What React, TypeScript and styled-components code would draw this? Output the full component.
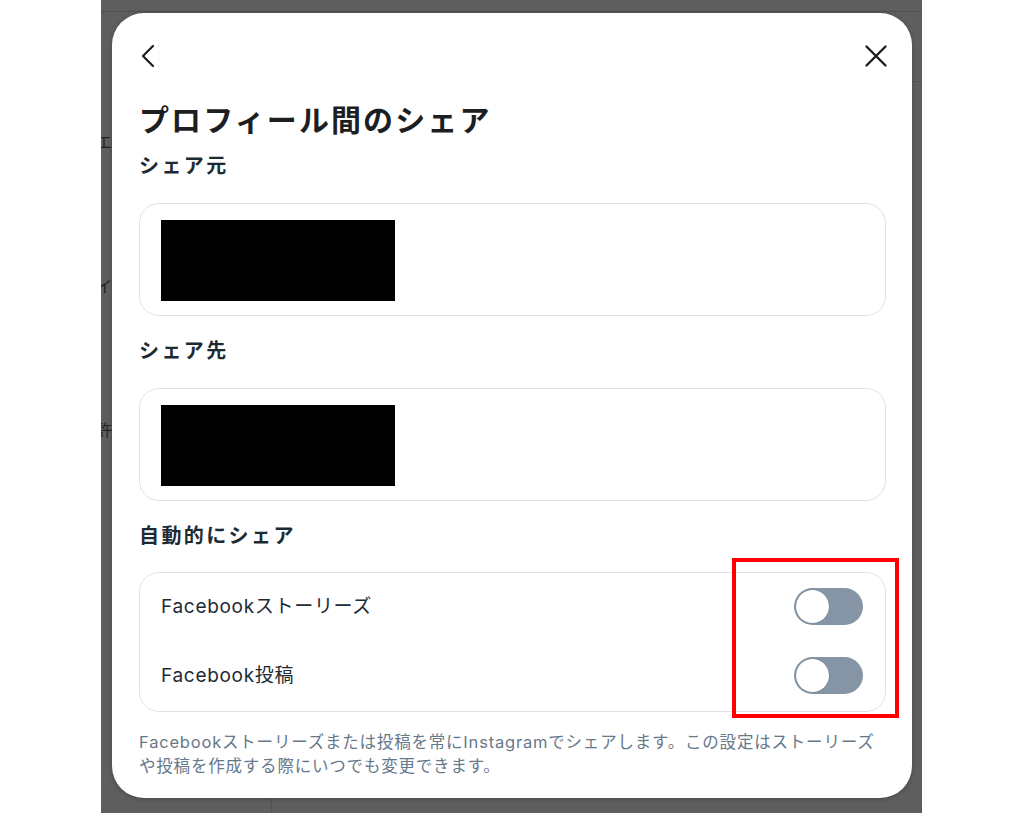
import React from 'react';
import styled, {createGlobalStyle} from 'styled-components';

const GlobalStyle = createGlobalStyle`
  html, body {
    margin: 0;
    padding: 0;
    background: #ffffff;
  }
  body {
    font-family: Inter, "Noto Sans CJK JP", "Noto Sans", sans-serif;
    -webkit-font-smoothing: antialiased;
  }
`;

const Page = styled.div`
  width: 1024px;
  height: 813px;
  display: flex;
  background: #ffffff;
`;

const Backdrop = styled.div`
  position: relative;
  margin-left: 101px;
  width: 821px;
  height: 813px;
  box-sizing: border-box;
  padding: 13px 10px 0 11px;
  background: #5e5e5e;
  overflow: hidden;
`;

// dimmed page behind the dialog
const BehindPage = styled.div`
  position: absolute;
  inset: 0;
  display: grid;
  grid-template-columns: 171px 1fr;
  grid-template-rows: 12px 70px 1fr;
`;

const BehindTop = styled.div`
  grid-column: 1 / 3;
  border-bottom: 1px solid #505050;
`;

const BehindSide = styled.div`
  grid-row: 2 / 4;
  border-right: 1px solid #535353;
  display: flex;
  flex-direction: column;
  gap: 122px;
  padding-top: 118px;
  margin-left: -5px;
  font-family: "Noto Sans CJK JP", sans-serif;
  font-size: 16px;
  line-height: 22px;
  color: #222222;
`;

const BehindHeader = styled.div`
  border-bottom: 1px solid #555555;
`;

const Modal = styled.div`
  position: relative;
  z-index: 1;
  width: 800px;
  height: 785px;
  box-sizing: border-box;
  padding: 21px 26px 0 27px;
  background: #ffffff;
  border-radius: 32px;
  box-shadow: 0 1px 4px rgba(0, 0, 0, 0.25);
  display: flex;
  flex-direction: column;
`;

const Header = styled.div`
  height: 44px;
  margin-right: -2px;
  display: flex;
  align-items: center;
  justify-content: space-between;
`;

const IconButton = styled.button`
  border: 0;
  padding: 0;
  background: none;
  width: 24px;
  height: 24px;
  display: flex;
  cursor: pointer;
  color: #1c1e21;
`;

const Title = styled.h1`
  margin: 22px 0 0;
  font-size: 30px;
  line-height: 40px;
  font-weight: 700;
  letter-spacing: 2.1px;
  color: #1c1e21;
`;

const SectionLabel = styled.h2<{$gap: number}>`
  margin: ${p => p.$gap}px 0 0;
  font-size: 20px;
  line-height: 28px;
  font-weight: 700;
  letter-spacing: 2.4px;
  color: #1c2b33;
`;

const Card = styled.div`
  margin-top: 23px;
  border: 1px solid #dde3ea;
  border-radius: 20px;
  box-sizing: border-box;
`;

const ProfileCard = styled(Card)`
  height: 113px;
  padding: 0 21px;
  display: flex;
  align-items: center;
`;

const Profile = styled.div`
  position: relative;
  display: flex;
  align-items: center;
  gap: 12px;
  height: 81px;
  width: 234px;
  margin-top: 2px;
`;

const Avatar = styled.div<{$ring: string}>`
  width: 44px;
  height: 44px;
  margin-left: 18px;
  border-radius: 50%;
  border: 2px solid ${p => p.$ring};
  background: #f0f2f5;
`;

const ProfileName = styled.span`
  font-size: 16px;
  color: #1c2b33;
`;

const Redaction = styled.div`
  position: absolute;
  inset: 0;
  background: #000000;
`;

const ToggleCard = styled(Card)`
  margin-top: 22px;
  padding: 0 22px 0 21px;
  display: flex;
  flex-direction: column;
`;

const ToggleRow = styled.div`
  height: 69px;
  display: flex;
  align-items: center;
  justify-content: space-between;
`;

const RowLabel = styled.span`
  font-size: 19px;
  line-height: 24px;
  margin-top: -2px;
  color: #1c2b33;
  letter-spacing: 0.7px;
`;

const Switch = styled.div<{$on: boolean}>`
  width: 69px;
  height: 37px;
  margin-top: -2px;
  box-sizing: border-box;
  border-radius: 19px;
  background: ${p => (p.$on ? '#0064e0' : '#8595a6')};
  padding: 2px;
  display: flex;
  justify-content: ${p => (p.$on ? 'flex-end' : 'flex-start')};
`;

const Knob = styled.div`
  width: 33px;
  height: 33px;
  border-radius: 50%;
  background: #ffffff;
  box-shadow: 0 0 1px rgba(0, 0, 0, 0.4);
`;

const Note = styled.p`
  margin: 18px 0 0;
  max-width: 740px;
  font-size: 16.5px;
  line-height: 24px;
  letter-spacing: 0.8px;
  color: #67788a;
`;

const Annotation = styled.div`
  position: absolute;
  left: 620px;
  top: 545px;
  width: 167px;
  height: 160px;
  box-sizing: border-box;
  border: 4px solid #ff0000;
  pointer-events: none;
`;

const ChevronLeft = () => (
  <svg width="24" height="24" viewBox="0 0 24 24" fill="none">
    <path d="M14 2 L4 12 L14 22" stroke="currentColor" strokeWidth="2.2" strokeLinecap="round" strokeLinejoin="round" />
  </svg>
);

const Cross = () => (
  <svg width="24" height="24" viewBox="0 0 24 24" fill="none">
    <path d="M2.5 2.5 L21.5 21.5 M21.5 2.5 L2.5 21.5" stroke="currentColor" strokeWidth="2.4" strokeLinecap="round" />
  </svg>
);

const toggles = [
  {label: 'Facebookストーリーズ', on: false},
  {label: 'Facebook投稿', on: false},
];

export default function App() {
  return (
    <>
      <GlobalStyle />
      <Page>
        <Backdrop>
          <BehindPage>
            <BehindTop />
            <BehindSide>
              <span>エ</span>
              <span>イ</span>
              <span>許</span>
            </BehindSide>
            <BehindHeader />
          </BehindPage>

          <Modal>
            <Header>
              <IconButton aria-label="戻る"><ChevronLeft /></IconButton>
              <IconButton aria-label="閉じる"><Cross /></IconButton>
            </Header>
            <Title>プロフィール間のシェア</Title>

            <SectionLabel $gap={12}>シェア元</SectionLabel>
            <ProfileCard>
              <Profile>
                <Avatar $ring="#c9a86a" />
                <ProfileName>instagram</ProfileName>
                <Redaction />
              </Profile>
            </ProfileCard>

            <SectionLabel $gap={21}>シェア先</SectionLabel>
            <ProfileCard>
              <Profile>
                <Avatar $ring="#dcdfe3" />
                <ProfileName>facebook</ProfileName>
                <Redaction />
              </Profile>
            </ProfileCard>

            <SectionLabel $gap={21}>自動的にシェア</SectionLabel>
            <ToggleCard>
              {toggles.map(t => (
                <ToggleRow key={t.label}>
                  <RowLabel>{t.label}</RowLabel>
                  <Switch $on={t.on}><Knob /></Switch>
                </ToggleRow>
              ))}
            </ToggleCard>

            <Note>
              Facebookストーリーズまたは投稿を常にInstagramでシェアします。この設定はストーリーズや投稿を作成する際にいつでも変更できます。
            </Note>

            <Annotation />
          </Modal>
        </Backdrop>
      </Page>
    </>
  );
}
